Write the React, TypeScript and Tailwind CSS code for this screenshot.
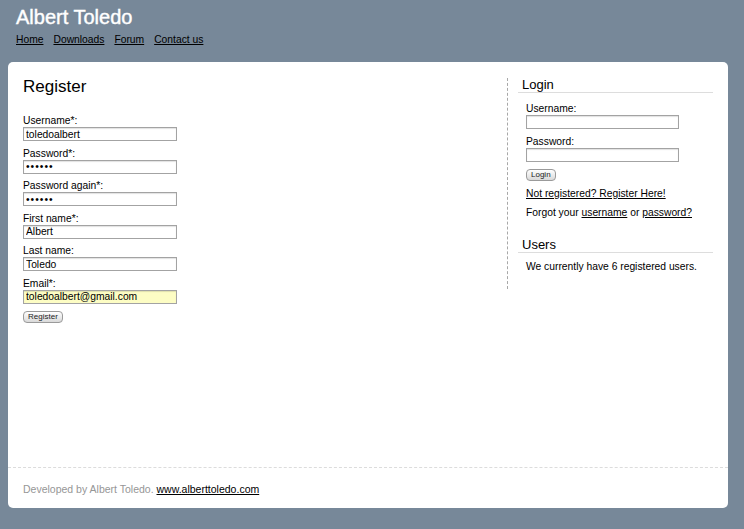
import React from 'react';

const inputCls =
  'block h-[14px] border border-[#a3a3a3] px-[2px] text-[10.3px] leading-[12px] text-black shadow-[inset_0_1px_1px_rgba(0,0,0,0.12)] outline-none';

const buttonCls =
  'block h-[12px] rounded-[4px] border border-[#9a9a9a] bg-linear-to-b from-white to-[#d9d9d9] px-[4px] text-[8px] leading-[10px] text-[#222]';

function Field({ label, value, type = 'text', wide = 154, yellow = false, step = 'mb-[6.6px]' }: {
  label: string;
  value?: string;
  type?: string;
  wide?: number;
  yellow?: boolean;
  step?: string;
}) {
  return (
    <div className={step}>
      <label className="block text-[10.3px] leading-[12px]">{label}</label>
      <input
        type={type}
        readOnly
        defaultValue={value}
        style={{ width: wide }}
        className={`${inputCls} ${yellow ? 'bg-[#fdfdc4]' : 'bg-white'} ${type === 'password' ? 'tracking-[1px]' : ''}`}
      />
    </div>
  );
}

export default function App() {
  return (
    <main className="min-h-screen bg-[#778899] font-['Liberation_Sans',Arial,sans-serif] text-black">

      <header className="px-4 pt-[5px]">
        <h1 className="text-[20px] leading-[24px] text-white [-webkit-text-stroke:0.4px_white]">Albert Toledo</h1>
        <nav className="mt-[5px] flex gap-[10px] text-[10.3px] leading-[12px]">
          <a href="#" className="underline">Home</a>
          <a href="#" className="underline">Downloads</a>
          <a href="#" className="underline">Forum</a>
          <a href="#" className="underline">Contact us</a>
        </nav>
      </header>

      <div className="ml-2 mt-4 w-[720px] rounded-[5px] bg-white">

        <div className="flex h-[405px] items-start px-[15px] pt-4">

          <section className="flex-1">
            <h2 className="text-[17px] leading-[17px]">Register</h2>
            <form className="mt-[20px]">
              <Field label="Username*:" value="toledoalbert" />
              <Field label="Password*:" value="123456" type="password" />
              <Field label="Password again*:" value="123456" type="password" />
              <Field label="First name*:" value="Albert" />
              <Field label="Last name:" value="Toledo" />
              <Field label="Email*:" value="toledoalbert@gmail.com" yellow />
              <button type="button" className={buttonCls}>Register</button>
            </form>
          </section>

          <aside className="w-[206px] border-l border-dashed border-[#a8a8a8] pb-[16px] pl-[10px]">
            <h3 className="border-b border-[#dddddd] pl-1 text-[13px] leading-[14px]">Login</h3>
            <div className="pl-2 text-[10.3px] leading-[12px]">
              <form className="mt-[10px]">
                <Field label="Username:" wide={153} step="mb-[7px]" />
                <Field label="Password:" type="password" wide={153} step="mb-[7px]" />
                <button type="button" className={buttonCls}>Login</button>
              </form>
              <p className="mt-[7px]"><a href="#" className="underline">Not registered? Register Here!</a></p>
              <p className="mt-[7px]">
                Forgot your <a href="#" className="underline">username</a> or <a href="#" className="underline">password?</a>
              </p>
            </div>
            <h3 className="mt-[19px] border-b border-[#dddddd] pl-1 text-[13px] leading-[14px]">Users</h3>
            <p className="mt-[8px] pl-2 text-[10.3px] leading-[12px]">We currently have 6 registered users.</p>
          </aside>

        </div>

        <footer className="border-t border-dashed border-[#dcdcdc] px-[15px] pb-[13px] pt-[15px] text-[10.5px] leading-[12px]">
          <span className="text-[#969696]">Developed by Albert Toledo.</span>{' '}
          <a href="#" className="underline">www.alberttoledo.com</a>
        </footer>

      </div>

    </main>
  );
}
